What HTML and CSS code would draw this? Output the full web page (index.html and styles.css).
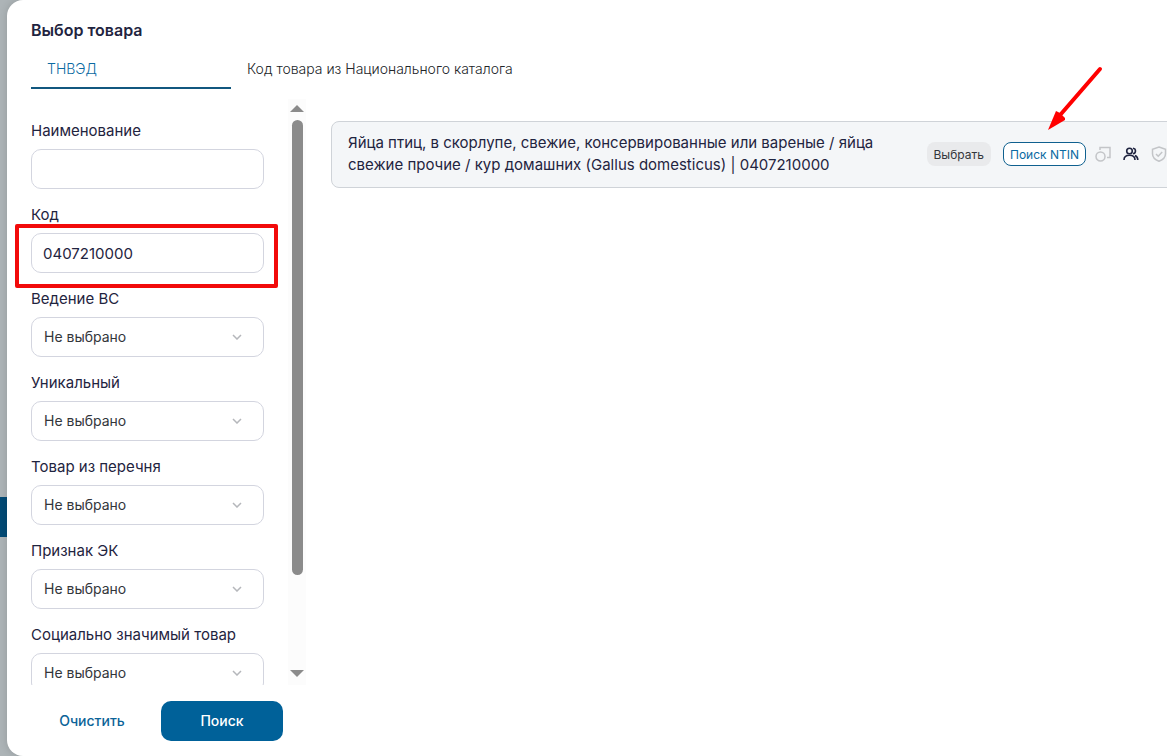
FILE: index.html
```html
<!DOCTYPE html>
<html lang="ru">
<head>
    <meta charset="UTF-8">
    <meta name="viewport" content="width=device-width, initial-scale=1.0">
    <title>Выбор товара</title>
    <link rel="stylesheet" href="styles.css">
</head>
<body>
    <div class="page-strip"></div>

    <main class="modal">
        <h1>Выбор товара</h1>

        <nav class="tabs">
            <a href="#" class="tab active">ТНВЭД</a>
            <a href="#" class="tab">Код товара из Национального каталога</a>
        </nav>

        <div class="content">
            <!-- Фильтры -->
            <form class="filters">
                <div class="filters-scroll">
                    <div class="fields">
                        <div class="field">
                            <label for="name">Наименование</label>
                            <input type="text" id="name">
                        </div>
                        <div class="field marked">
                            <label for="code">Код</label>
                            <input type="text" id="code" value="0407210000">
                        </div>
                        <div class="field">
                            <label for="vs">Ведение ВС</label>
                            <div class="select">
                                <select id="vs"><option>Не выбрано</option></select>
                                <svg viewBox="0 0 10 6"><path d="M1 1l4 4 4-4"/></svg>
                            </div>
                        </div>
                        <div class="field">
                            <label for="unique">Уникальный</label>
                            <div class="select">
                                <select id="unique"><option>Не выбрано</option></select>
                                <svg viewBox="0 0 10 6"><path d="M1 1l4 4 4-4"/></svg>
                            </div>
                        </div>
                        <div class="field">
                            <label for="list">Товар из перечня</label>
                            <div class="select">
                                <select id="list"><option>Не выбрано</option></select>
                                <svg viewBox="0 0 10 6"><path d="M1 1l4 4 4-4"/></svg>
                            </div>
                        </div>
                        <div class="field">
                            <label for="ek">Признак ЭК</label>
                            <div class="select">
                                <select id="ek"><option>Не выбрано</option></select>
                                <svg viewBox="0 0 10 6"><path d="M1 1l4 4 4-4"/></svg>
                            </div>
                        </div>
                        <div class="field">
                            <label for="social">Социально значимый товар</label>
                            <div class="select">
                                <select id="social"><option>Не выбрано</option></select>
                                <svg viewBox="0 0 10 6"><path d="M1 1l4 4 4-4"/></svg>
                            </div>
                        </div>
                    </div>
                    <div class="scrollbar">
                        <svg viewBox="0 0 14 7"><path d="M7 0l7 7H0z"/></svg>
                        <div class="track"><div class="thumb"></div></div>
                        <svg viewBox="0 0 14 7"><path d="M0 0h14L7 7z"/></svg>
                    </div>
                </div>
                <div class="buttons">
                    <button type="reset" class="clear">Очистить</button>
                    <button type="submit" class="search">Поиск</button>
                </div>
            </form>

            <!-- Результаты -->
            <section class="results">
                <article class="product">
                    <p>Яйца птиц, в скорлупе, свежие, консервированные или вареные / яйца свежие прочие / кур домашних (Gallus domesticus) | 0407210000</p>
                    <div class="actions">
                        <button type="button" class="choose">Выбрать</button>
                        <div class="ntin-wrap">
                            <button type="button" class="ntin">Поиск NTIN</button>
                            <svg class="arrow" viewBox="0 0 56 66">
                                <path d="M53 4L14 49" fill="none" stroke="#f00" stroke-width="4" stroke-linecap="round"/>
                                <path d="M1 65L9 46l4 2 5 5 0 2z" fill="#f00"/>
                            </svg>
                        </div>
                        <div class="icons">
                            <svg viewBox="0 0 16 16"><circle cx="5.500" cy="10.500" r="4.500"/><path d="M5 4V1.500h10v10h-3"/></svg>
                            <svg class="dark" viewBox="0 0 16 16"><circle cx="6.500" cy="5" r="2.800"/><path d="M1 14c0-3 2-4.700 5.500-4.700S12 11 12 14M10 2.300c3.300.5 3.300 5 0 5.500M12 9.500c2 .8 2.800 2.200 2.800 4.500"/></svg>
                            <svg viewBox="0 0 16 16"><path d="M8 1l6.500 2.300v4.500c0 3.500-2.500 6-6.500 7.500-4-1.500-6.500-4-6.500-7.500V3.300zM5 8l2.200 2.200L11.200 6"/></svg>
                        </div>
                    </div>
                </article>
            </section>
        </div>
    </main>
</body>
</html>
```

FILE: styles.css
```css
*, *::after { box-sizing: border-box; }
body { margin: 0; height: 100vh; display: flex; overflow: hidden; background-color: #adb4b7; font-family: Inter, sans-serif; font-size: 14px; color: #1f2440; }
button, input, select { font-family: inherit; font-size: 14px; color: inherit; margin: 0; }
button { border: none; cursor: pointer; }

.page-strip { flex: none; align-self: flex-start; width: 7px; height: 40px; margin-top: 497px; background-color: #034a75; }
.modal { flex: 1; min-width: 0; display: flex; flex-direction: column; padding-top: 20px; background-color: white; border-radius: 16px 0 0 16px; box-shadow: 0 0 8px rgba(0,0,0,0.15); overflow: hidden; }
h1 { margin: 0 24px; font-size: 16px; line-height: 20px; font-weight: 600; }

.tabs { display: flex; margin: 9px 24px 0; }
.tab { height: 40px; padding: 0 16px; line-height: 40px; font-weight: 300; color: #222529; text-decoration: none; }
.tab.active { width: 200px; color: #0b6aa2; border-bottom: 2px solid #11577f; }

.content { flex: 1; min-height: 0; display: flex; margin-top: 10px; }
.filters { flex: none; width: 299px; display: flex; flex-direction: column; }
.filters-scroll { flex: 1; min-height: 0; display: flex; }
.fields { flex: 1; padding: 22px 24px 0 24px; overflow: hidden; }
.field { position: relative; margin-bottom: 16px; }
.field label { display: block; margin-bottom: 8px; font-size: 15px; line-height: 20px; }
.field input, .field select { display: block; width: 100%; height: 40px; padding: 0 11px; background-color: white; border: 1px solid #d3d5df; border-radius: 10px; outline: none; }
.field input { font-size: 15px; }
.field select { padding: 0 12px 2px; appearance: none; color: #33363b; }
.select { position: relative; }
.select svg { position: absolute; right: 22px; top: 17px; width: 10px; height: 6px; fill: none; stroke: #b5b7bb; stroke-width: 1.5; pointer-events: none; }
.marked::after { content: ""; position: absolute; left: -16px; right: -14px; top: 19px; height: 64px; border: 4px solid #f20a0a; border-radius: 2px; pointer-events: none; }

.scrollbar { width: 18px; display: flex; flex-direction: column; align-items: center; gap: 8px; padding: 6px 0 8px; background-color: #fcfcfc; }
.scrollbar svg { flex: none; width: 14px; height: 7px; fill: #8b8b8b; }
.track { flex: 1; width: 11px; }
.thumb { height: 84%; background-color: #8b8b8b; border-radius: 6px; }

.buttons { display: grid; grid-template-columns: 1fr 1fr; gap: 8px; padding: 16px 23px 15px 24px; }
.buttons button { height: 40px; padding-bottom: 2px; border-radius: 10px; font-weight: 500; }
.clear { background: none; color: #0b6398; }
.search { background-color: #006199; color: white; }

.results { flex: 1; min-width: 0; padding: 22px 0 0 25px; }
.product { display: flex; align-items: center; margin-right: -20px; padding: 10px 19px 11px 16px; background-color: #f4f6f8; border: 1px solid #cfd3d8; border-radius: 8px; }
.product p { flex: 1; margin: 0; font-size: 15px; line-height: 22px; }
.actions { flex: none; display: flex; align-items: center; margin-left: 12px; }
.actions button { height: 24px; padding: 0 7px; border-radius: 8px; font-size: 12px; }
.choose { background-color: #e9eaec; color: #33363b; }
.ntin-wrap { position: relative; margin: 0 9px 0 12px; }
.actions .ntin { display: block; padding: 0 6px; background-color: white; border: 1px solid #0f608f; color: #0b6aa2; }
.arrow { position: absolute; left: 44px; top: -77px; width: 56px; height: 66px; }
.icons { display: flex; gap: 12px; }
.icons svg { width: 16px; height: 16px; fill: none; stroke: #c3c5c8; stroke-width: 1.5; }
.icons .dark { stroke: #1f2440; stroke-width: 1.6; }
```
